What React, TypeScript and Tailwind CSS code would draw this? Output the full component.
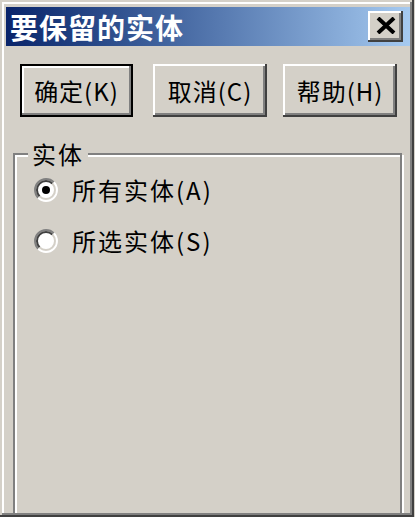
const raised =
  "shadow-[inset_-2px_-2px_#404040,inset_2px_2px_#ffffff,inset_-4px_-4px_#808080,inset_4px_4px_#d4d0c8]";

function Radio({ checked }: { checked: boolean }) {
  return (
    <svg width="24" height="24" viewBox="0 0 12 12" className="shrink-0">
      <circle cx="6" cy="6" r="5" fill="#ffffff" />
      <path d="M2.111 9.889 A5.5 5.5 0 0 1 9.889 2.111" fill="none" stroke="#808080" strokeWidth="1" />
      <path d="M9.889 2.111 A5.5 5.5 0 0 1 2.111 9.889" fill="none" stroke="#ffffff" strokeWidth="1" />
      <path d="M2.818 9.182 A4.5 4.5 0 0 1 9.182 2.818" fill="none" stroke="#404040" strokeWidth="1" />
      <path d="M9.182 2.818 A4.5 4.5 0 0 1 2.818 9.182" fill="none" stroke="#d4d0c8" strokeWidth="1" />
      {checked && <circle cx="6" cy="6" r="2" fill="#000000" />}
    </svg>
  );
}

function Button({ label, isDefault, width }: { label: string; isDefault?: boolean; width: string }) {
  return (
    <button
      className={
        isDefault
          ? `${width} h-[53px] bg-[#d4d0c8] border-2 border-black shadow-[inset_-2px_-2px_#808080,inset_2px_2px_#ffffff] text-[24px] leading-none tracking-[1px] text-black`
          : `${width} h-[53px] bg-[#d4d0c8] ${raised} text-[24px] leading-none tracking-[1px] text-black`
      }
    >
      {label}
    </button>
  );
}

export default function App() {
  return (
    <div className="w-[415px] h-[517px] bg-[#d4d0c8] overflow-hidden font-['Noto_Sans_CJK_SC','Noto_Sans_CJK_JP',sans-serif]">
      <div className="w-[414px] h-[517px] bg-[#d4d0c8] pt-[7px] pl-[6px] pr-[4px] pb-[4px] shadow-[inset_-2px_-2px_#404040,inset_2px_2px_#d4d0c8,inset_-4px_-4px_#808080,inset_4px_4px_#ffffff]">
        <div className="h-full overflow-hidden flex flex-col">
          {/* title bar */}
          <div className="h-[39px] shrink-0 bg-linear-to-r from-[#0a246a] to-[#a6caf0] flex items-center justify-between pl-[4px] pr-[7px]">
            <span className="text-white font-bold text-[28px] leading-none tracking-[1px]">要保留的实体</span>
            <button className={`w-[35px] h-[31px] bg-[#d4d0c8] ${raised} flex items-center justify-center`}>
              <svg width="20" height="17" viewBox="0 0 20 17" className="-mt-[2px]">
                <path d="M2 1 L18 16 M18 1 L2 16" stroke="#000000" strokeWidth="4" />
              </svg>
            </button>
          </div>

          {/* buttons */}
          <div className="flex mt-[18px] ml-[14px] shrink-0">
            <Button label="确定(K)" isDefault width="w-[113px]" />
            <div className="ml-[20px]">
              <Button label="取消(C)" width="w-[114px]" />
            </div>
            <div className="ml-[16px]">
              <Button label="帮助(H)" width="w-[114px]" />
            </div>
          </div>

          {/* group box */}
          <fieldset className="mt-[24px] ml-[7px] w-[389px] h-[420px] shrink-0 border-2 border-[#808080] shadow-[inset_2px_2px_#ffffff,2px_2px_#ffffff]">
            <legend className="ml-[13px] px-[4px] bg-[#d4d0c8] text-[24px] leading-[26px] text-black tracking-[2px]">
              实体
            </legend>
            <div className="flex flex-col gap-[25px] mt-[10px] ml-[19px]">
              <label className="flex items-center gap-[14px] h-[26px]">
                <Radio checked />
                <span className="text-[24px] leading-[26px] tracking-[2px] text-black">所有实体(A)</span>
              </label>
              <label className="flex items-center gap-[14px] h-[26px]">
                <Radio checked={false} />
                <span className="text-[24px] leading-[26px] tracking-[2px] text-black">所选实体(S)</span>
              </label>
            </div>
          </fieldset>
        </div>
      </div>
    </div>
  );
}
